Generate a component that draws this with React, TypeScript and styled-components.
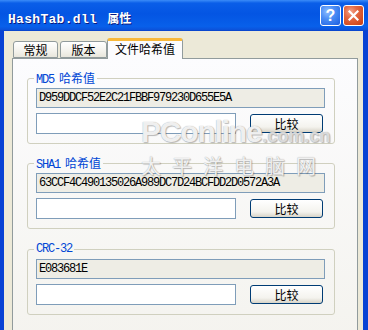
import React from 'react';
import styled, { createGlobalStyle } from 'styled-components';

const GlobalStyle = createGlobalStyle`
  html, body {
    margin: 0;
    padding: 0;
    background: #ffffff;
  }
`;

const Window = styled.div`
  position: relative;
  width: 368px;
  height: 330px;
  overflow: hidden;
  display: flex;
  flex-direction: column;
  background: #0842d4;
  font-family: 'Noto Sans CJK SC', 'Liberation Sans', sans-serif;
`;

const TitleBar = styled.div`
  height: 31px;
  flex: none;
  display: flex;
  align-items: center;
  padding: 0 4px 0 8px;
  box-sizing: border-box;
  background: linear-gradient(
    #3b8cf8 0,
    #0a5ee8 10%,
    #0455e3 45%,
    #0860ea 85%,
    #0b54dc 95%,
    #0840c8 100%
  );
`;

const TitleText = styled.div`
  flex: 1;
  padding-top: 5px;
  color: #ffffff;
  font-family: 'Liberation Mono', 'Noto Sans CJK SC', monospace;
  font-weight: bold;
  font-size: 13px;
  letter-spacing: 0.3px;
  text-shadow: 1px 1px 0 #0a1a80;
  white-space: pre;
`;

const TitleCjk = styled.span`
  font-family: 'Noto Sans CJK SC', sans-serif;
  font-size: 12px;
  letter-spacing: 0;
  margin-left: 2px;
`;

const CaptionButton = styled.div<{ $kind: 'help' | 'close' }>`
  width: 21px;
  height: 21px;
  box-sizing: border-box;
  margin-left: 2px;
  border: 1px solid #ffffff;
  border-radius: 3px;
  display: flex;
  align-items: center;
  justify-content: center;
  color: #ffffff;
  font-family: 'Liberation Sans', Arial, sans-serif;
  font-weight: bold;
  font-size: 16px;
  background: ${({ $kind }) =>
    $kind === 'close'
      ? 'radial-gradient(circle at 35% 30%, #f4a48a 0, #e46a45 35%, #d24a1d 80%, #c0401a 100%)'
      : 'radial-gradient(circle at 35% 30%, #8dbdff 0, #4c8ef5 40%, #2a6ee8 80%, #1d5ad8 100%)'};
`;

const Body = styled.div`
  flex: 1;
  margin: 0 5px 0 4px;
  padding: 6px 5px 0 8px;
  background: #ece9d8;
  display: flex;
  flex-direction: column;
`;

const TabStrip = styled.div`
  display: flex;
  align-items: flex-end;
  height: 21px;
  padding-left: 1px;
  position: relative;
  z-index: 1;
`;

const Tab = styled.div<{ $active?: boolean; $width: number }>`
  width: ${({ $width }) => $width}px;
  height: ${({ $active }) => ($active ? 21 : 17)}px;
  box-sizing: border-box;
  margin-left: ${({ $active }) => ($active ? 0 : 2)}px;
  margin-bottom: ${({ $active }) => ($active ? -1 : 0)}px;
  border: 1px solid #919b9c;
  border-bottom: ${({ $active }) => ($active ? 'none' : '1px solid #919b9c')};
  border-top: ${({ $active }) => ($active ? '3px solid #f8b83a' : '1px solid #919b9c')};
  border-radius: 3px 3px 0 0;
  background: ${({ $active }) =>
    $active ? '#fcfcfe' : 'linear-gradient(#ffffff, #f3f2ec 60%, #e8e6dc)'};
  display: flex;
  align-items: center;
  justify-content: center;
  font-size: 12px;
  line-height: 14px;
  color: #000000;
  padding-bottom: ${({ $active }) => ($active ? 2 : 0)}px;

  &:first-child {
    margin-left: 0;
  }
`;

const Panel = styled.div`
  height: 290px;
  flex: none;
  border: 1px solid #919b9c;
  background: linear-gradient(#fcfcfe, #f4f3ee);
  padding: 12px 0 0 14px;
  box-sizing: border-box;
`;

const Group = styled.fieldset`
  width: 308px;
  box-sizing: border-box;
  margin: 0 0 12px 0;
  padding: 3px 9px 9px 8px;
  border: 1px solid #d0d0bf;
  border-radius: 3px;
  display: flex;
  flex-direction: column;
  gap: 5px;

  &:nth-of-type(2) {
    margin-bottom: 13px;
  }
`;

const Legend = styled.legend`
  padding: 0 2px;
  margin-left: -2px;
  height: 14px;
  line-height: 14px;
  color: #0046d5;
  font-family: 'Liberation Mono', monospace;
  font-size: 12px;
  letter-spacing: -1.2px;
`;

const LegendCjk = styled.span`
  font-family: 'Noto Sans CJK SC', sans-serif;
  font-size: 12px;
  letter-spacing: 0;
  margin-left: 5px;
`;

const HashField = styled.div`
  height: 20px;
  box-sizing: border-box;
  border: 1px solid #7f9db9;
  background: #eeede5;
  padding-left: 2px;
  display: flex;
  align-items: center;
  font-family: 'Liberation Mono', monospace;
  font-size: 12px;
  letter-spacing: -1.2px;
  color: #000000;
`;

const CompareRow = styled.div`
  display: flex;
  align-items: center;
`;

const CompareInput = styled.input`
  width: 200px;
  height: 21px;
  box-sizing: border-box;
  border: 1px solid #7f9db9;
  background: #ffffff;
  margin: 0;
  padding: 0 2px;
  outline: none;
`;

const CompareButton = styled.button`
  width: 73px;
  height: 19px;
  margin: 0 2px 0 auto;
  padding: 0;
  box-sizing: border-box;
  border: 1px solid #003c74;
  border-radius: 3px;
  background: linear-gradient(#ffffff, #f4f3ee 70%, #d8d4c8);
  font-family: 'Noto Sans CJK SC', sans-serif;
  font-size: 12px;
  line-height: 14px;
  color: #000000;
`;

const Watermark = styled.div`
  position: absolute;
  left: 141px;
  top: 114px;
  pointer-events: none;
  color: rgba(255, 255, 255, 0.85);
  text-shadow: 0 0 1px #9a9a9a, 1px 1px 1px rgba(0, 0, 0, 0.25);
`;

const WatermarkBrand = styled.div`
  font-family: 'Liberation Sans', Arial, sans-serif;
  font-weight: bold;
  white-space: nowrap;
  line-height: 36px;
`;

const BrandBig = styled.span`
  font-size: 30px;
  letter-spacing: -1.2px;
`;

const BrandSmall = styled.span`
  font-size: 18px;
  margin-left: 1px;
  color: rgba(235, 235, 235, 0.8);
`;

const WatermarkCn = styled.div`
  font-family: 'Noto Sans CJK SC', sans-serif;
  font-size: 20px;
  line-height: 22px;
  letter-spacing: 11px;
  white-space: nowrap;
`;

type Hash = { label: string; cjk?: string; value: string };

const hashes: Hash[] = [
  { label: 'MD5', cjk: '哈希值', value: 'D959DDCF52E2C21FBBF979230D655E5A' },
  { label: 'SHA1', cjk: '哈希值', value: '63CCF4C490135026A989DC7D24BCFDD2D0572A3A' },
  { label: 'CRC-32', value: 'E083681E' },
];

const App: React.FC = () => {
  return (
    <>
      <GlobalStyle />
      <Window>
        <TitleBar>
          <TitleText>
            HashTab.dll <TitleCjk>属性</TitleCjk>
          </TitleText>
          <CaptionButton $kind="help">?</CaptionButton>
          <CaptionButton $kind="close">
            <svg width="11" height="11" viewBox="0 0 11 11">
              <path d="M1.5 1.5 L9.5 9.5 M9.5 1.5 L1.5 9.5" stroke="#ffffff" strokeWidth="2.2" strokeLinecap="square" />
            </svg>
          </CaptionButton>
        </TitleBar>

        <Body>
          <TabStrip>
            <Tab $width={45}>常规</Tab>
            <Tab $width={47}>版本</Tab>
            <Tab $width={76} $active>文件哈希值</Tab>
          </TabStrip>
          <Panel>
            {hashes.map((h) => (
              <Group key={h.label}>
                <Legend>
                  {h.label}
                  {h.cjk && <LegendCjk>{h.cjk}</LegendCjk>}
                </Legend>
                <HashField>{h.value}</HashField>
                <CompareRow>
                  <CompareInput type="text" />
                  <CompareButton>比较</CompareButton>
                </CompareRow>
              </Group>
            ))}
          </Panel>
        </Body>

        <Watermark>
          <WatermarkBrand>
            <BrandBig>PConline</BrandBig>
            <BrandSmall>.com.cn</BrandSmall>
          </WatermarkBrand>
          <WatermarkCn>太平洋电脑网</WatermarkCn>
        </Watermark>
      </Window>
    </>
  );
};

export default App;
